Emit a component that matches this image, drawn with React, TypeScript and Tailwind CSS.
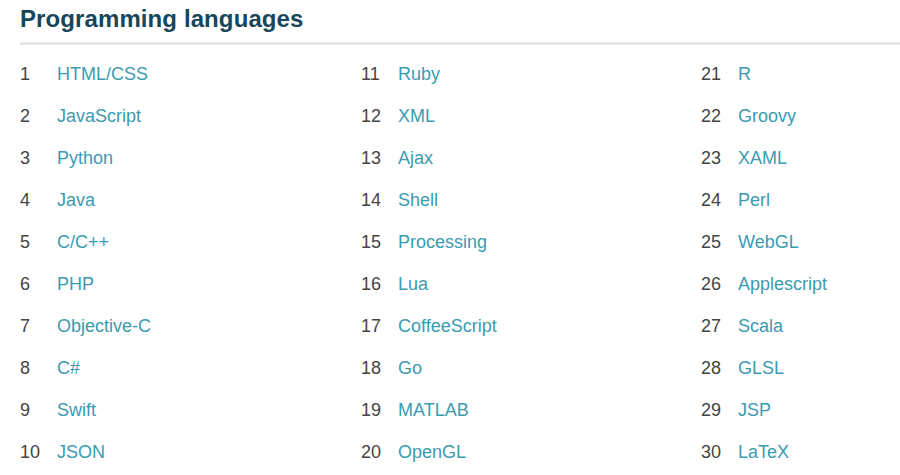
const LANGUAGES = [
  'HTML/CSS', 'JavaScript', 'Python', 'Java', 'C/C++', 'PHP', 'Objective-C', 'C#', 'Swift', 'JSON',
  'Ruby', 'XML', 'Ajax', 'Shell', 'Processing', 'Lua', 'CoffeeScript', 'Go', 'MATLAB', 'OpenGL',
  'R', 'Groovy', 'XAML', 'Perl', 'WebGL', 'Applescript', 'Scala', 'GLSL', 'JSP', 'LaTeX',
];

export default function App() {
  const columns = [0, 1, 2].map((c) => LANGUAGES.slice(c * 10, c * 10 + 10));

  return (
    <div className="h-[475px] w-[900px] overflow-hidden bg-white pl-5 font-['Liberation_Sans',Arial,sans-serif]">
      <h2 className="pt-[2px] text-[24px] leading-[34px] font-bold tracking-[0.1px] text-[#17475a]">
        Programming languages
      </h2>
      <div className="mt-[6px] h-[3px] bg-[#e3e5e6]" />
      <div className="mt-[8px] grid grid-cols-[341px_340px_1fr]">
        {columns.map((col, ci) => (
          <ol key={ci}>
            {col.map((name, i) => (
              <li key={name} className="flex h-[42px] items-center text-[18px]">
                <span className="w-[37px] text-[#444]">{ci * 10 + i + 1}</span>
                <a className="text-[#3b9bb0]">{name}</a>
              </li>
            ))}
          </ol>
        ))}
      </div>
    </div>
  );
}
